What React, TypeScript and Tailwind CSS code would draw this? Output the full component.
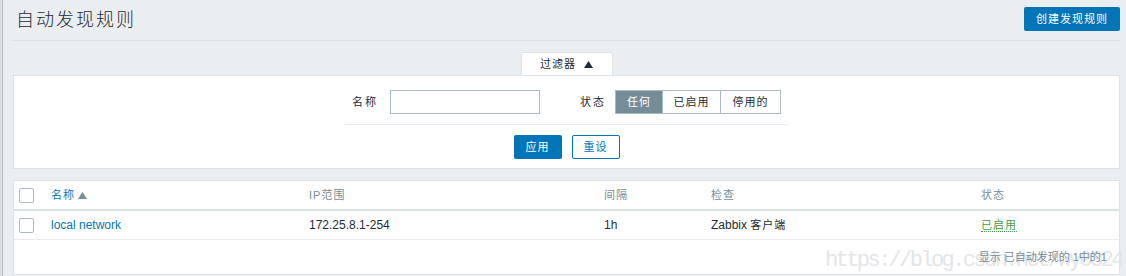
import { useState } from "react"

const cjk = "font-['Liberation_Sans','Noto_Sans_CJK_SC',sans-serif]"

const cols = "grid grid-cols-[31px_258px_295px_107px_270px_1fr]"

function Checkbox() {
  return <span className="block h-[15px] w-[15px] rounded-[2px] border border-[#acbbc2] bg-white" />
}

export default function App() {
  const [status, setStatus] = useState("任何")
  const [name, setName] = useState("")

  return (
    <div className={`relative flex h-[276px] w-full overflow-hidden bg-[#ebeef0] text-[12px] text-[#1f2c33] ${cjk}`}>
      <div className="flex w-[3px] shrink-0 bg-[#dcdfe2]">
        <div className="ml-[2px] w-px bg-[#b9bcbf]" />
      </div>

      <div className="flex min-w-0 flex-1 flex-col pl-[10px] pr-[6px]">
        {/* header */}
        <div className="flex h-[41px] shrink-0 items-center justify-between border-b border-[#dde2e5]">
          <h1 className="pl-[3px] text-[18px] font-light tracking-[2px] text-[#1f2c33]">自动发现规则</h1>
          <button className="mb-[2px] h-[24px] w-[96px] rounded-[2px] bg-[#0275b8] text-[11px] tracking-[1px] text-white">
            创建发现规则
          </button>
        </div>

        {/* filter tab */}
        <div className="mt-[11px] flex justify-center">
          <div className="flex h-[23px] w-[92px] items-center justify-center gap-[8px] rounded-t-[2px] border border-b-0 border-[#dde2e5] bg-white text-[11px] tracking-[1px]">
            过滤器
            <svg width="9" height="7" viewBox="0 0 9 7">
              <path d="M0 7 L4.5 0 L9 7 Z" fill="#1f2c33" />
            </svg>
          </div>
        </div>

        {/* filter panel */}
        <div className="flex h-[94px] shrink-0 flex-col items-center border border-[#dde2e5] bg-white">
          <div className="flex w-[443px] flex-col items-center border-b border-[#ebeef0] pb-[10px] pt-[14px]">
            <div className="flex items-center">
              <span className="mr-[12px] text-[11px] tracking-[2px]">名称</span>
              <input
                value={name}
                onChange={(e) => setName(e.target.value)}
                className="h-[24px] w-[150px] border border-[#acbbc2] px-[5px] text-[12px] outline-none"
              />
              <span className="ml-[40px] mr-[9px] text-[11px] tracking-[2px]">状态</span>
              <div className="flex h-[24px] text-[11px] tracking-[1px]">
                {["任何", "已启用", "停用的"].map((s, i) => (
                  <button
                    key={s}
                    onClick={() => setStatus(s)}
                    className={`h-full border border-[#acbbc2] ${i > 0 ? "-ml-px" : ""} ${i === 0 ? "w-[48px]" : i === 1 ? "w-[59px]" : "w-[61px]"} ${status === s ? "border-[#768d99] bg-[#768d99] text-white" : "bg-white text-[#1f2c33]"}`}
                  >
                    {s}
                  </button>
                ))}
              </div>
            </div>
          </div>
          <div className="mt-[10px] flex gap-[10px] text-[11px] tracking-[1px]">
            <button className="h-[24px] w-[48px] rounded-[2px] bg-[#0275b8] text-white">应用</button>
            <button className="h-[24px] w-[48px] rounded-[2px] border border-[#0275b8] bg-white text-[#0275b8]">重设</button>
          </div>
        </div>

        {/* table */}
        <div className="mt-[11px] flex h-[95px] shrink-0 flex-col border border-[#dde2e5] bg-white">
          <div className={`${cols} h-[30px] items-center border-b-2 border-[#dde2e5] text-[11px] tracking-[1px] text-[#768d99]`}>
            <div className="pl-[5px]">
              <Checkbox />
            </div>
            <div className="flex items-center gap-[3px] pl-[6px] text-[#0275b8]">
              名称
              <svg width="9" height="7" viewBox="0 0 9 7">
                <path d="M0 7 L4.5 0 L9 7 Z" fill="#768d99" />
              </svg>
            </div>
            <div className="pl-[6px]">IP范围</div>
            <div className="pl-[6px]">间隔</div>
            <div className="pl-[6px]">检查</div>
            <div className="pl-[6px]">状态</div>
          </div>
          <div className={`${cols} h-[29px] items-center border-b border-[#e8ebed]`}>
            <div className="pl-[5px]">
              <Checkbox />
            </div>
            <div className="pl-[6px] text-[#0275b8]">local network</div>
            <div className="pl-[6px]">172.25.8.1-254</div>
            <div className="pl-[6px]">1h</div>
            <div className="pl-[6px]">
              Zabbix <span className="text-[11px] tracking-[1px]">客户端</span>
            </div>
            <div className="pl-[6px]">
              <span className="border-b border-dotted border-[#429e47] text-[11px] tracking-[1px] text-[#429e47]">已启用</span>
            </div>
          </div>
          <div className="relative flex flex-1 items-center justify-end pr-[12px] text-[11px] text-[#768d99]">
            <span className="absolute left-[811px] top-[4px] whitespace-nowrap font-['Liberation_Mono',monospace] text-[22px] tracking-[-2.6px] text-[#e3e5e7]">
              https://blog.csdn.net/wy0324
            </span>
            <span className="relative">显示 已自动发现的 1中的1</span>
          </div>
        </div>
      </div>
    </div>
  )
}
